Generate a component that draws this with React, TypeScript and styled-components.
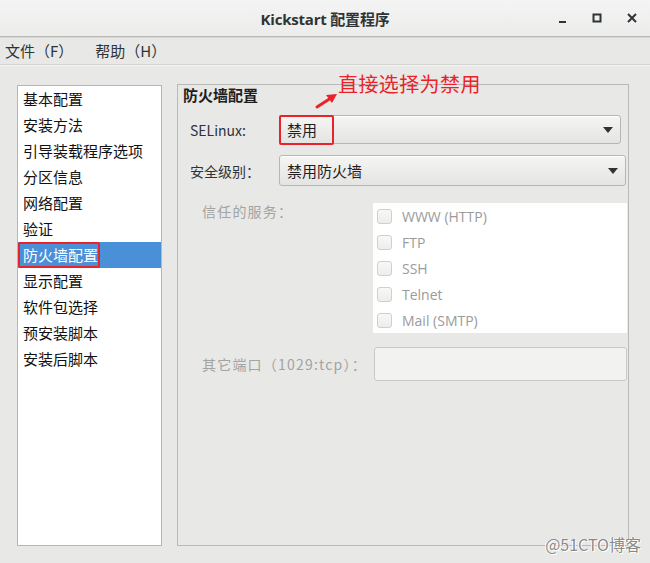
import React from 'react';
import styled, { createGlobalStyle } from 'styled-components';

const GlobalStyle = createGlobalStyle`
  html, body {
    margin: 0;
    padding: 0;
    background: #e8e8e7;
  }
  * {
    box-sizing: border-box;
  }
`;

const CJK = `"Open Sans", "Noto Sans CJK SC", sans-serif`;

const Window = styled.div`
  position: relative;
  width: 650px;
  height: 563px;
  overflow: hidden;
  background: #e8e8e7;
  font-family: ${CJK};
  color: #1e1e1e;
  display: flex;
  flex-direction: column;
`;

const TitleBar = styled.div`
  height: 37px;
  flex: none;
  display: flex;
  align-items: center;
  justify-content: center;
  position: relative;
  background: linear-gradient(#f4f4f4, #ececeb);
  border-bottom: 1px solid #b9b9b6;
  box-shadow: 0 1px 0 #d5d5d3;
`;

const Title = styled.div`
  font-size: 15px;
  font-weight: 700;
  color: #2e3436;
  letter-spacing: -0.2px;
`;

const WinButtons = styled.div`
  position: absolute;
  right: 10px;
  top: 0;
  height: 36px;
  display: flex;
  align-items: center;
  gap: 19px;
`;

const WinButton = styled.div`
  width: 16px;
  height: 16px;
  display: flex;
  align-items: center;
  justify-content: center;
`;

const MenuBar = styled.div`
  height: 28px;
  flex: none;
  display: flex;
  align-items: center;
  padding-left: 5px;
  gap: 22px;
  border-bottom: 1px solid #d3d3d0;
  box-shadow: 0 1px 0 #f4f4f3;
  font-family: "Noto Sans CJK SC", sans-serif;
  font-size: 15px;
  color: #2e3436;
`;

const Body = styled.div`
  flex: 1;
  display: flex;
  gap: 15px;
  padding: 20px 21px 17px 17px;
`;

const NavList = styled.div`
  width: 145px;
  background: #fff;
  border: 1px solid #b6b6b3;
  display: flex;
  flex-direction: column;
`;

const NavItem = styled.div<{ $active?: boolean }>`
  height: 26px;
  flex: none;
  display: flex;
  align-items: center;
  padding-left: 5px;
  padding-bottom: 2px;
  font-family: "Noto Sans CJK SC", sans-serif;
  font-size: 15px;
  line-height: 1;
  color: ${p => (p.$active ? '#fff' : '#111')};
  background: ${p => (p.$active ? '#4a90d9' : 'transparent')};
  position: relative;
`;

const RedMark = styled.div`
  position: absolute;
  border: 2px solid #e8232a;
  border-radius: 2px;
  pointer-events: none;
`;

const Panel = styled.div`
  flex: 1;
  margin-top: -1px;
  border: 1px solid #b9b9b6;
  display: flex;
  flex-direction: column;
  padding: 0 0 0 12px;
`;

const Legend = styled.div`
  font-family: "Noto Sans CJK SC", sans-serif;
  font-weight: 700;
  font-size: 15px;
  height: 20px;
  line-height: 20px;
  margin-left: -7px;
  color: #1e1e1e;
`;

const FormGrid = styled.div`
  display: grid;
  grid-template-columns: 89px 1fr;
  margin-top: 10px;
  row-gap: 11px;
`;

const Label = styled.div`
  display: flex;
  align-items: center;
  font-size: 14px;
  font-family: "Noto Sans CJK SC", sans-serif;
  white-space: nowrap;
  color: #2e3436;
`;

const Combo = styled.div<{ $h: number; $right: number }>`
  position: relative;
  height: ${p => p.$h}px;
  margin-right: ${p => p.$right}px;
  border: 1px solid #b6b6b3;
  border-radius: 3px;
  background: linear-gradient(#f5f5f4, #e4e4e2);
  box-shadow: inset 0 1px 0 #fff;
  display: flex;
  align-items: center;
  padding: 0 7px;
  font-family: "Noto Sans CJK SC", sans-serif;
  font-size: 15px;
  color: #1e1e1e;
`;

const ComboText = styled.span`
  flex: 1;
`;

const Arrow = styled.span`
  width: 0;
  height: 0;
  border-left: 5px solid transparent;
  border-right: 5px solid transparent;
  border-top: 6px solid #2e3436;
`;

const Disabled = styled.div`
  display: grid;
  grid-template-columns: 171px 1fr;
  padding-left: 12px;
  margin-top: 17px;
  row-gap: 14px;
`;

const DimLabel = styled.div<{ $top?: boolean }>`
  display: flex;
  align-items: ${p => (p.$top ? 'flex-start' : 'center')};
  line-height: ${p => (p.$top ? '16px' : 'normal')};
  font-family: "Noto Sans CJK SC", sans-serif;
  font-size: 14px;
  letter-spacing: 1.2px;
  white-space: nowrap;
  color: #a3a3a1;
`;

const ServiceBox = styled.div`
  margin-right: 1px;
  background: #fff;
  height: 130px;
  display: flex;
  flex-direction: column;
`;

const Service = styled.div`
  height: 26px;
  display: flex;
  align-items: center;
  padding-left: 4px;
  gap: 10px;
  font-size: 14px;
  color: #9b9b99;
`;

const Check = styled.span`
  width: 15px;
  height: 15px;
  border: 1px solid #cfcfcd;
  border-radius: 3px;
  background: linear-gradient(#f8f8f7, #ededec);
`;

const PortInput = styled.div`
  margin-left: 1px;
  margin-right: 1px;
  height: 34px;
  border: 1px solid #c9c9c7;
  border-radius: 3px;
  background: #f2f2f1;
`;

const Annotation = styled.div`
  position: absolute;
  left: 338px;
  top: 69px;
  font-family: "Noto Sans CJK SC", sans-serif;
  font-size: 20px;
  color: #ec2227;
  letter-spacing: 0.4px;
`;

const ArrowSvg = styled.svg`
  position: absolute;
  left: 314px;
  top: 92px;
`;

const Watermark = styled.div`
  position: absolute;
  right: 9px;
  bottom: 7px;
  font-family: "Noto Sans CJK SC", sans-serif;
  font-size: 16px;
  color: #8a8a8a;
  text-shadow: 1px 1px 0 #fff, -1px 0 0 #fff;
`;

const navItems = [
  '基本配置',
  '安装方法',
  '引导装载程序选项',
  '分区信息',
  '网络配置',
  '验证',
  '防火墙配置',
  '显示配置',
  '软件包选择',
  '预安装脚本',
  '安装后脚本',
];

const services = ['WWW (HTTP)', 'FTP', 'SSH', 'Telnet', 'Mail (SMTP)'];

export default function App() {
  return (
    <Window>
      <GlobalStyle />
      <TitleBar>
        <Title>Kickstart 配置程序</Title>
        <WinButtons>
          <WinButton>
            <svg width="16" height="16" viewBox="0 0 16 16">
              <rect x="5" y="11" width="7" height="2" fill="#2e3436" />
            </svg>
          </WinButton>
          <WinButton>
            <svg width="16" height="16" viewBox="0 0 16 16">
              <rect x="4.5" y="4.5" width="7" height="7" fill="none" stroke="#2e3436" strokeWidth="2" />
            </svg>
          </WinButton>
          <WinButton>
            <svg width="16" height="16" viewBox="0 0 16 16">
              <path d="M4 4 L12 12 M12 4 L4 12" stroke="#2e3436" strokeWidth="2" />
            </svg>
          </WinButton>
        </WinButtons>
      </TitleBar>
      <MenuBar>
        <span>文件（F）</span>
        <span>帮助（H）</span>
      </MenuBar>
      <Body>
        <NavList>
          {navItems.map(item => (
            <NavItem key={item} $active={item === '防火墙配置'}>
              {item}
              {item === '防火墙配置' && (
                <RedMark style={{ left: 0, top: 0, width: 82, height: 26 }} />
              )}
            </NavItem>
          ))}
        </NavList>
        <Panel>
          <Legend>防火墙配置</Legend>
          <FormGrid>
            <Label>SELinux:</Label>
            <Combo $h={29} $right={7}>
              <ComboText>禁用</ComboText>
              <Arrow />
              <RedMark style={{ left: -1, top: -1, width: 55, height: 30 }} />
            </Combo>
            <Label>安全级别：</Label>
            <Combo $h={31} $right={2}>
              <ComboText>禁用防火墙</ComboText>
              <Arrow />
            </Combo>
          </FormGrid>
          <Disabled>
            <DimLabel $top>信任的服务：</DimLabel>
            <ServiceBox>
              {services.map(s => (
                <Service key={s}>
                  <Check />
                  {s}
                </Service>
              ))}
            </ServiceBox>
            <DimLabel>其它端口（1029:tcp）：</DimLabel>
            <PortInput />
          </Disabled>
        </Panel>
      </Body>
      <Annotation>直接选择为禁用</Annotation>
      <ArrowSvg width="26" height="18" viewBox="0 0 26 18">
        <path d="M3 15 L17 6" stroke="#ec2227" strokeWidth="3" strokeLinecap="round" />
        <path d="M23 2 L12 3 L18 11 Z" fill="#ec2227" />
      </ArrowSvg>
      <Watermark>@51CTO博客</Watermark>
    </Window>
  );
}
